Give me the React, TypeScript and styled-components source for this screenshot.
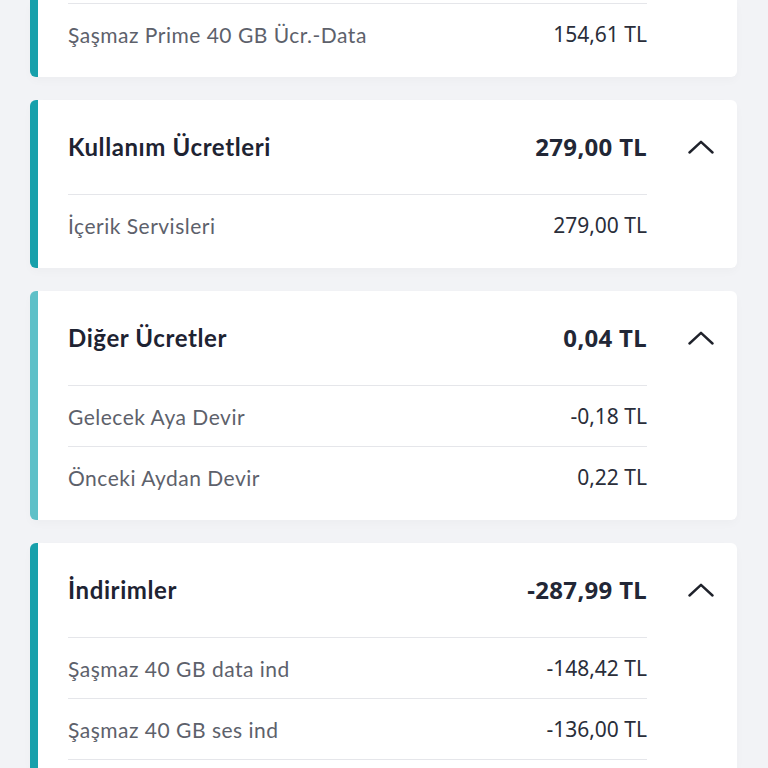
import React from "react";
import styled, { createGlobalStyle } from "styled-components";

const GlobalStyle = createGlobalStyle`
  html, body {
    margin: 0;
    padding: 0;
    background: #f2f3f6;
    overflow: hidden;
  }
  * {
    box-sizing: border-box;
  }
`;

interface Item {
  label: string;
  amount: string;
}

interface Section {
  title?: string;
  total?: string;
  accent: string;
  cut?: boolean;
  continues?: boolean;
  items: Item[];
}

const sections: Section[] = [
  {
    accent: "#17a0ab",
    cut: true,
    items: [{ label: "Şaşmaz Prime 40 GB Ücr.-Data", amount: "154,61 TL" }],
  },
  {
    title: "Kullanım Ücretleri",
    total: "279,00 TL",
    accent: "#17a0ab",
    items: [{ label: "İçerik Servisleri", amount: "279,00 TL" }],
  },
  {
    title: "Diğer Ücretler",
    total: "0,04 TL",
    accent: "#5ec0c8",
    items: [
      { label: "Gelecek Aya Devir", amount: "-0,18 TL" },
      { label: "Önceki Aydan Devir", amount: "0,22 TL" },
    ],
  },
  {
    title: "İndirimler",
    total: "-287,99 TL",
    accent: "#17a0ab",
    continues: true,
    items: [
      { label: "Şaşmaz 40 GB data ind", amount: "-148,42 TL" },
      { label: "Şaşmaz 40 GB ses ind", amount: "-136,00 TL" },
    ],
  },
];

const Page = styled.div`
  display: flex;
  flex-direction: column;
  gap: 23px;
  padding: 0 31px 40px 30px;
  height: 768px;
  overflow: hidden;
`;

const Card = styled.section<{ $accent: string; $cut?: boolean }>`
  flex-shrink: 0;
  background: #ffffff;
  border-left: 8px solid ${(p) => p.$accent};
  border-radius: ${(p) => (p.$cut ? "0 0 6px 6px" : "6px")};
  padding: ${(p) => (p.$cut ? "3px" : "0")} 0 13px 30px;
  box-shadow: 0 4px 10px rgba(30, 40, 60, 0.025);
`;

const Header = styled.div`
  display: flex;
  align-items: center;
  height: 94px;
  padding-bottom: 1px;
`;

const Title = styled.h2`
  flex: 1;
  margin: 0;
  font-family: Lato, "Noto Sans", sans-serif;
  font-weight: 700;
  font-size: 24px;
  letter-spacing: 0.6px;
  color: #1e2332;
`;

const Total = styled.span`
  font-family: "Noto Sans", sans-serif;
  font-weight: 700;
  font-size: 24px;
  letter-spacing: 0.3px;
  color: #222736;
`;

const Toggle = styled.button`
  display: flex;
  align-items: center;
  justify-content: center;
  width: 26px;
  height: 16px;
  margin: 0 23px 0 41px;
  padding: 0;
  border: none;
  background: none;
  cursor: pointer;
`;

const List = styled.div<{ $continues?: boolean }>`
  margin-right: 90px;
  border-bottom: ${(p) => (p.$continues ? "1px solid #e5e6ea" : "none")};
`;

const Row = styled.div`
  display: flex;
  align-items: center;
  justify-content: space-between;
  height: 61px;
  border-top: 1px solid #e5e6ea;
`;

const Label = styled.span`
  font-family: Lato, "Noto Sans", sans-serif;
  font-size: 21px;
  letter-spacing: 0.5px;
  color: #5d616b;
`;

const Amount = styled.span`
  font-family: "Noto Sans", sans-serif;
  font-size: 21px;
  color: #2a2e3a;
`;

const ChevronUp = () => (
  <svg width="26" height="14" viewBox="0 0 26 14" fill="none">
    <polyline
      points="1.5,12.5 13,1.8 24.5,12.5"
      stroke="#1f222b"
      strokeWidth="2.4"
      strokeLinecap="round"
      strokeLinejoin="round"
    />
  </svg>
);

const App: React.FC = () => (
  <>
    <GlobalStyle />
    <Page>
      {sections.map((s, i) => (
        <Card key={i} $accent={s.accent} $cut={s.cut}>
          {s.title && (
            <Header>
              <Title>{s.title}</Title>
              <Total>{s.total}</Total>
              <Toggle aria-label="Daralt">
                <ChevronUp />
              </Toggle>
            </Header>
          )}
          <List $continues={s.continues}>
            {s.items.map((it) => (
              <Row key={it.label}>
                <Label>{it.label}</Label>
                <Amount>{it.amount}</Amount>
              </Row>
            ))}
          </List>
        </Card>
      ))}
    </Page>
  </>
);

export default App;
